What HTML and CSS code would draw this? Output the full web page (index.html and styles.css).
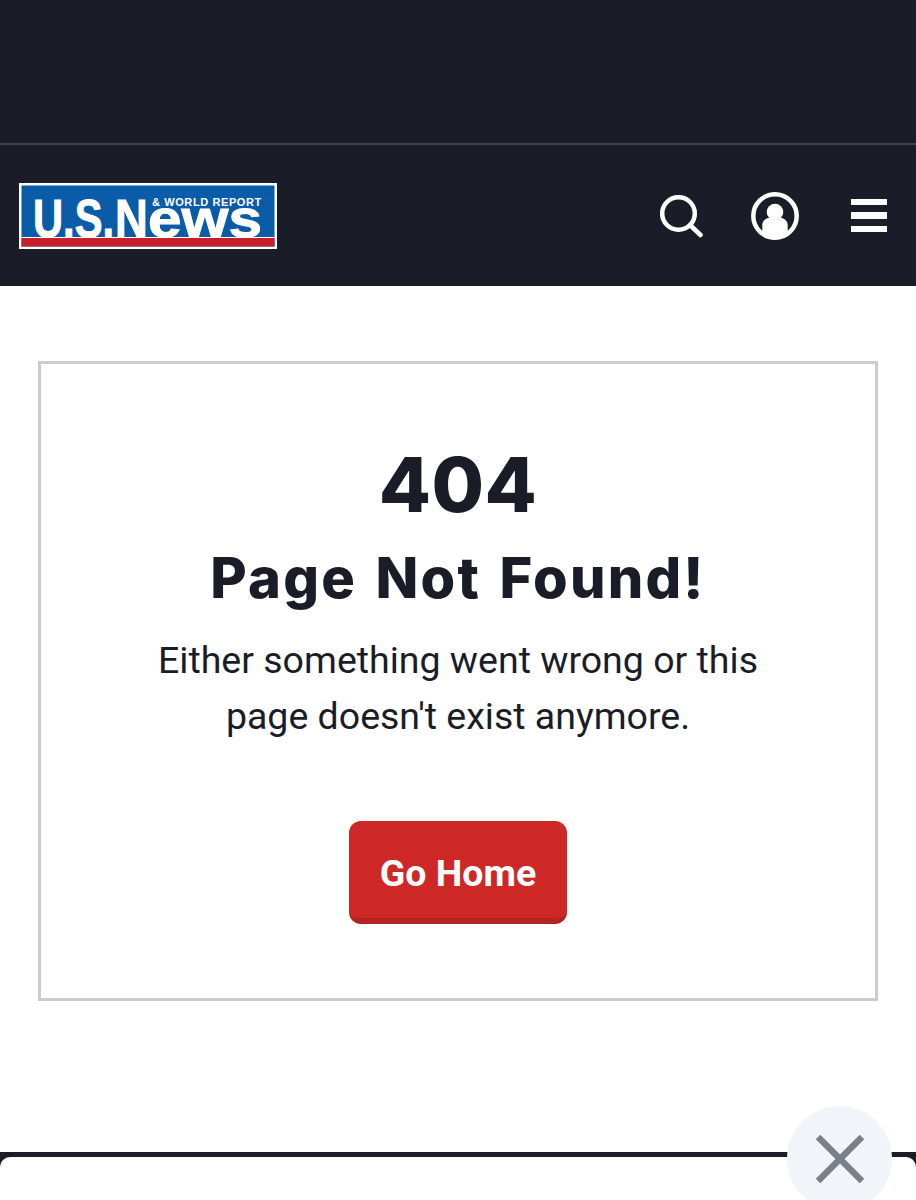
FILE: index.html
```html
<!DOCTYPE html>
<html lang="en">

<head>
    <meta charset="UTF-8">
    <meta name="viewport" content="width=device-width, initial-scale=1.0">
    <title>Page Not Found</title>
    <link rel="stylesheet" href="styles.css">
</head>

<body>
    <div class="top-band"></div>

    <header class="site-header">
        <a class="logo" href="#" aria-label="U.S. News and World Report">
            <svg width="258" height="66" viewBox="0 0 258 66">
                <rect width="258" height="66" fill="#fff" />
                <rect x="2.5" y="2.5" width="253" height="61" fill="#0a5ba8" />
                <text class="logo-main" x="14" y="54" textLength="81" lengthAdjust="spacingAndGlyphs">U.S.</text>
                <text class="logo-main" x="96" y="54" textLength="33" lengthAdjust="spacingAndGlyphs">N</text>
                <text class="logo-main" x="129" y="54" textLength="114" lengthAdjust="spacingAndGlyphs">ews</text>
                <text class="logo-sub" x="133" y="23">&amp; WORLD REPORT</text>
                <rect x="2.5" y="54" width="253" height="1.2" fill="#fff" />
                <rect x="2.5" y="55" width="253" height="8.5" fill="#c8202b" />
            </svg>
        </a>
        <nav class="header-icons">
            <svg class="icon-search" width="43" height="44" viewBox="0 0 43 44" fill="none" stroke="#fff" stroke-linecap="round">
                <circle cx="18.5" cy="19.5" r="16.3" stroke-width="4.5" />
                <path d="M30 31 L40.5 41" stroke-width="4.5" />
            </svg>
            <svg class="icon-user" width="48" height="48" viewBox="0 0 48 48">
                <circle cx="24" cy="24" r="21.7" fill="none" stroke="#fff" stroke-width="4.5" />
                <circle cx="24" cy="20" r="8.3" fill="#fff" />
                <path d="M11.3 41 V33 C11.3 29 14 26.5 19 25.5 Q24 29 29 25.5 C34 26.5 36.7 29 36.7 33 V41 C30 46 18 46 11.3 41 Z" fill="#fff" />
            </svg>
            <div class="icon-menu"><span></span><span></span><span></span></div>
        </nav>
    </header>

    <main class="page">
        <section class="error-card">
            <h1>404</h1>
            <h2>Page Not Found!</h2>
            <p>Either something went wrong or this<br>page doesn't exist anymore.</p>
            <a class="btn-home" href="#">Go Home</a>
        </section>
    </main>

    <div class="bottom-sheet">
        <button class="sheet-close" aria-label="Close">
            <svg width="48" height="48" viewBox="0 0 48 48" stroke="#7b7f88" stroke-width="6.5">
                <path d="M2 2 L46 46 M46 2 L2 46" />
            </svg>
        </button>
    </div>
</body>

</html>
```

FILE: styles.css
```css
:root {
    --dark-bg: #1a1d27;
    --border-color: #cccccc;
    --red: #cd2826;
    --red-dark: #b22422;
}

* {
    margin: 0;
    padding: 0;
    box-sizing: border-box;
}

html,
body {
    height: 1200px;
    overflow: hidden;
}

body {
    font-family: Roboto, 'Liberation Sans', sans-serif;
    color: var(--dark-bg);
    background: #fff;
}

.top-band {
    height: 145px;
    background: var(--dark-bg);
    border-bottom: 2px solid #3f424e;
}

.site-header {
    height: 141px;
    background: var(--dark-bg);
    display: flex;
    align-items: center;
    justify-content: space-between;
    padding: 0 29px 0 19px;
}

.logo {
    display: block;
    height: 66px;
}

.logo svg {
    display: block;
}

.logo-main {
    font-family: 'Liberation Sans', sans-serif;
    font-weight: 700;
    font-size: 54px;
    fill: #fff;
    stroke: #fff;
    stroke-width: 1px;
}

.logo-sub {
    font-family: 'Liberation Sans', sans-serif;
    font-weight: 700;
    font-size: 11px;
    letter-spacing: 0.6px;
    fill: #fff;
}

.header-icons {
    display: flex;
    align-items: center;
}

.icon-search {
    margin-right: 48px;
}

.icon-user {
    margin-right: 52px;
}

.icon-menu {
    width: 36px;
    display: flex;
    flex-direction: column;
    gap: 7px;
}

.icon-menu span {
    display: block;
    height: 6.5px;
    background: #fff;
}

.page {
    padding: 75px 38px 0;
}

.error-card {
    height: 640px;
    border: 3px solid var(--border-color);
    padding-top: 74px;
    text-align: center;
}

.error-card h1 {
    font-family: Inter, 'Liberation Sans', sans-serif;
    font-weight: 800;
    font-size: 76px;
    line-height: 92px;
    letter-spacing: 0.5px;
}

.error-card h2 {
    font-family: Inter, 'Liberation Sans', sans-serif;
    font-weight: 800;
    font-size: 56px;
    line-height: 70px;
    letter-spacing: 2.2px;
    word-spacing: 4px;
    margin-top: 13px;
}

.error-card p {
    font-size: 37.5px;
    line-height: 56px;
    margin-top: 19px;
}

.btn-home {
    display: block;
    width: 218px;
    height: 103px;
    margin: 77px auto 0;
    padding-top: 30px;
    background: var(--red);
    border-bottom: 6px solid var(--red-dark);
    border-radius: 12px;
    color: #fff;
    font-size: 37.5px;
    font-weight: 700;
    line-height: 44px;
    text-decoration: none;
}

.bottom-sheet {
    position: relative;
    height: 60px;
    margin-top: 151px;
    background: var(--dark-bg);
    padding-top: 5px;
}

.bottom-sheet::before {
    content: '';
    display: block;
    height: 100%;
    background: #fff;
    border-radius: 10px 10px 0 0;
}

.sheet-close {
    position: absolute;
    left: 787px;
    top: -46px;
    width: 105px;
    height: 105px;
    border: none;
    border-radius: 50%;
    background: #f1f4f8;
    display: flex;
    align-items: center;
    justify-content: center;
}
```
